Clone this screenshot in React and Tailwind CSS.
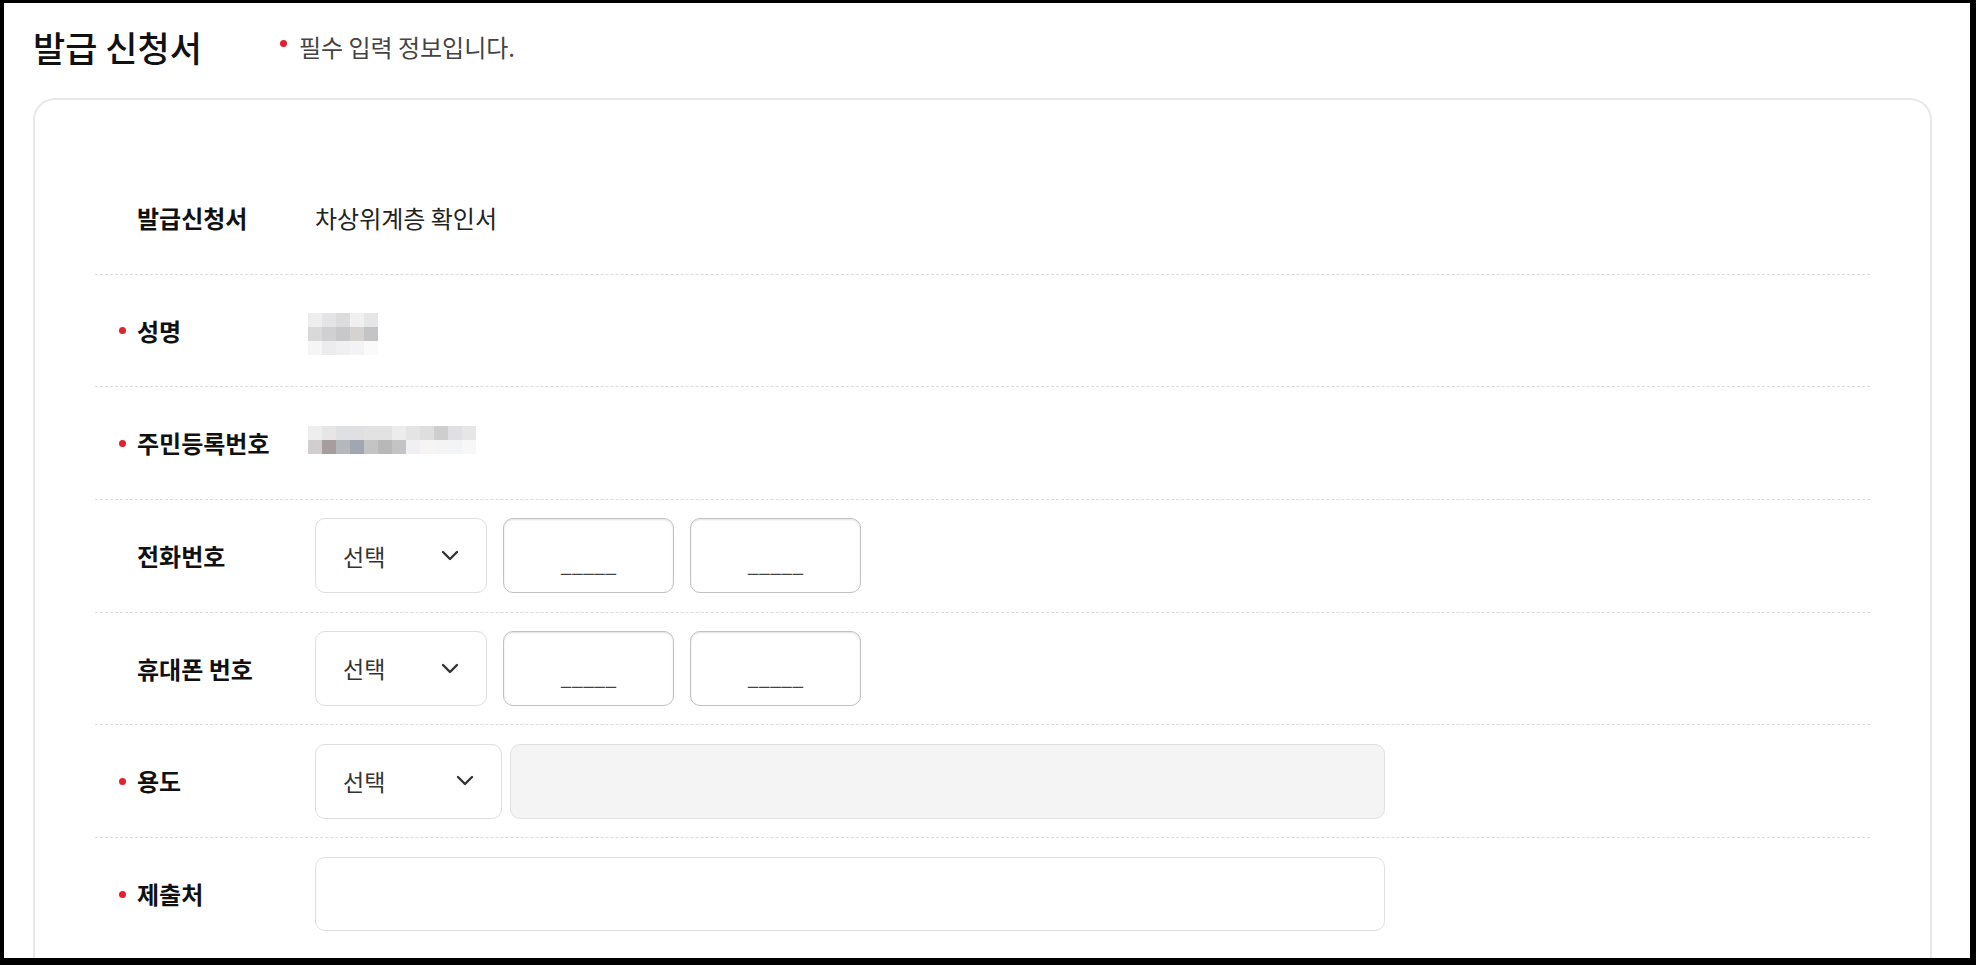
import React from 'react';

const FONT = '"Noto Sans CJK KR", "Noto Sans", sans-serif';

const nameCells = [
  ['#eeeeee', '#e4e4e6', '#dcdcdc', '#f0f0f0', '#e6e6e6'],
  ['#d9d9d9', '#d0d0d3', '#c8c8ca', '#d6d2d0', '#c4c4c6'],
  ['#f5f5f5', '#ececee', '#f0f0f0', '#f3f3f5', '#fafafa'],
];

const idCells = [
  ['#eeeeee', '#e6e6e6', '#dfe0e2', '#e0e0e2', '#e2e2e2', '#e2e2e2', '#ececec', '#e4e4e4', '#dedede', '#cecece', '#e0e0e4', '#e6e6e6'],
  ['#d0cece', '#a89d9d', '#b5b8ba', '#a2a6b0', '#c4c4c4', '#b8b8b8', '#c4c4c6', '#f0f0f4', '#f6f5f3', '#f4f4f4', '#f3f4f6', '#f7f7f7'],
];

// blurred (mosaic) personal data
const Mosaic = ({ cells }) => (
  <div className="flex flex-col">
    {cells.map((row, i) => (
      <div key={i} className="flex">
        {row.map((c, j) => (
          <div key={j} className="w-[14px] h-[14px]" style={{ backgroundColor: c }} />
        ))}
      </div>
    ))}
  </div>
);

const Chevron = () => (
  <svg width="18" height="12" viewBox="0 0 18 12" fill="none">
    <polyline points="2,2 9,9 16,2" stroke="#333" strokeWidth="2.4" strokeLinecap="round" strokeLinejoin="round" />
  </svg>
);

const SelectBox = ({ width = 'w-[172px]' }) => (
  <div className={`${width} h-[75px] rounded-[10px] border border-[#dedede] bg-white flex items-center justify-between pl-[27px] pr-[27px]`}>
    <span className="text-[23px] text-[#333]">선택</span>
    <Chevron />
  </div>
);

const NumberBox = () => (
  <div className="w-[171px] h-[75px] rounded-[10px] border border-[#c2c2c2] shadow-[inset_0_1px_2px_rgba(0,0,0,0.12)] bg-white flex items-center justify-center">
    <span className="text-[20px] text-[#444] pt-[16px]">_____</span>
  </div>
);

const Row = ({ label, required, last, children }) => (
  <div className={`flex items-center h-[112.7px] ${last ? '' : 'border-b border-dashed border-[#dcdcdc]'}`}>
    <div className="w-[220px] flex items-center pl-[24px]">
      <span className="w-[13px] flex">
        {required && <span className="w-[7px] h-[7px] rounded-full bg-[#e3202c]" />}
      </span>
      <span className="pl-[5px] text-[24px] font-bold text-[#111]">{label}</span>
    </div>
    <div className="flex-1 flex items-center">{children}</div>
  </div>
);

const App = () => {
  return (
    <div
      className="w-[1976px] h-[965px] overflow-hidden bg-white border-black border-l-4 border-t-[3px] border-r-[6px] border-b-[7px]"
      style={{ fontFamily: FONT }}
    >
      <div className="pl-[29px] pr-[38px]">
        <div className="h-[87px] flex items-center">
          <h1 className="text-[35px] font-medium text-[#111] leading-none">발급 신청서</h1>
          <div className="ml-[78px] flex items-center">
            <span className="w-[7px] h-[7px] rounded-full bg-[#e3202c] mb-[6px]" />
            <span className="ml-[12px] text-[24px] text-[#444]">필수 입력 정보입니다.</span>
          </div>
        </div>

        <div className="mt-[8px] h-[1000px] rounded-t-[22px] border-2 border-b-0 border-[#e8e8e8] px-[60px] pt-[62px]">
          <Row label="발급신청서">
            <span className="text-[24px] text-[#222]">차상위계층 확인서</span>
          </Row>
          <Row label="성명" required>
            <div className="-ml-[7px] mt-[6px]">
              <Mosaic cells={nameCells} />
            </div>
          </Row>
          <Row label="주민등록번호" required>
            <div className="-ml-[7px] -mt-[6px]">
              <Mosaic cells={idCells} />
            </div>
          </Row>
          <Row label="전화번호">
            <div className="flex gap-[16px]">
              <SelectBox />
              <NumberBox />
              <NumberBox />
            </div>
          </Row>
          <Row label="휴대폰 번호">
            <div className="flex gap-[16px]">
              <SelectBox />
              <NumberBox />
              <NumberBox />
            </div>
          </Row>
          <Row label="용도" required>
            <div className="flex gap-[8px]">
              <SelectBox width="w-[187px]" />
              <div className="w-[875px] h-[75px] rounded-[10px] border border-[#e0e0e0] bg-[#f4f4f4]" />
            </div>
          </Row>
          <Row label="제출처" required last>
            <div className="w-[1070px] h-[74px] rounded-[10px] border border-[#e0e0e0] bg-white" />
          </Row>
        </div>
      </div>
    </div>
  );
};

export default App;
